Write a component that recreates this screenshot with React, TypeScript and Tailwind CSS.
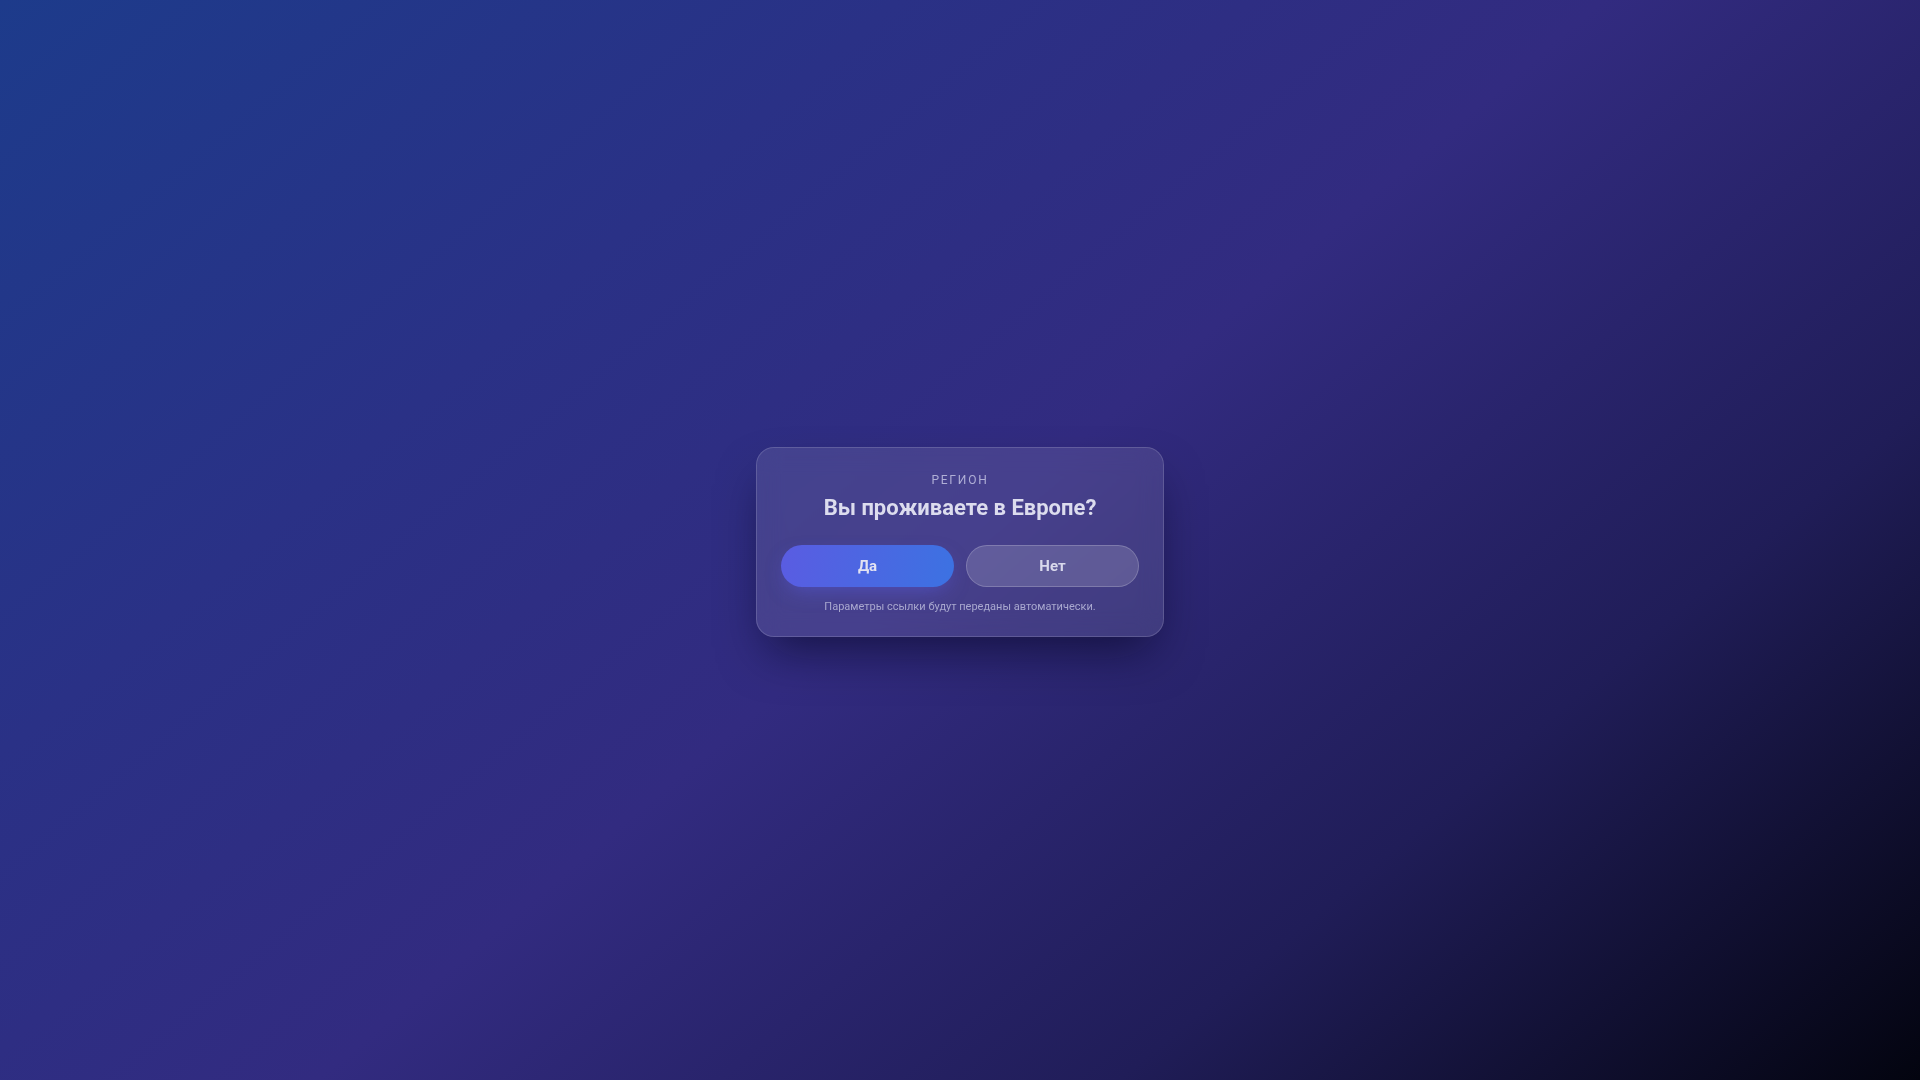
import React from "react";

export default function App() {
  return (
    <div
      className="w-full h-screen flex items-center justify-center bg-[linear-gradient(140deg,#1d3b8b_0%,#2a3186_28%,#322b80_50%,#201d58_75%,#03040f_100%)]"
      style={{ fontFamily: "Roboto, 'Noto Sans', 'Liberation Sans', sans-serif" }}
    >
      <div className="mt-1 w-[408px] rounded-[18px] border border-white/15 bg-white/10 backdrop-blur-md shadow-[0_24px_48px_-12px_rgba(5,5,30,0.6)] px-6 pt-6 pb-[21px] flex flex-col items-center">
        <div className="text-xs leading-4 tracking-[0.15em] text-[#b0afd6] uppercase">Регион</div>
        <h1 className="mt-[6px] text-[22px] leading-7 font-bold text-[#dcdcee]">Вы проживаете в Европе?</h1>
        <div className="mt-[23px] w-full grid grid-cols-2 gap-3">
          <button className="h-[42px] rounded-full bg-[linear-gradient(100deg,#5a5ce2_0%,#3c72e2_100%)] text-[15px] font-bold text-[#e2e2f2] shadow-[0_8px_20px_-6px_rgba(90,92,226,0.55)]">
            Да
          </button>
          <button className="h-[42px] rounded-full bg-white/15 border border-white/20 text-[15px] font-bold text-[#d9d9ec]">
            Нет
          </button>
        </div>
        <p className="mt-3 text-[11px] leading-4 text-[#a9a8cf]">Параметры ссылки будут переданы автоматически.</p>
      </div>
    </div>
  );
}
